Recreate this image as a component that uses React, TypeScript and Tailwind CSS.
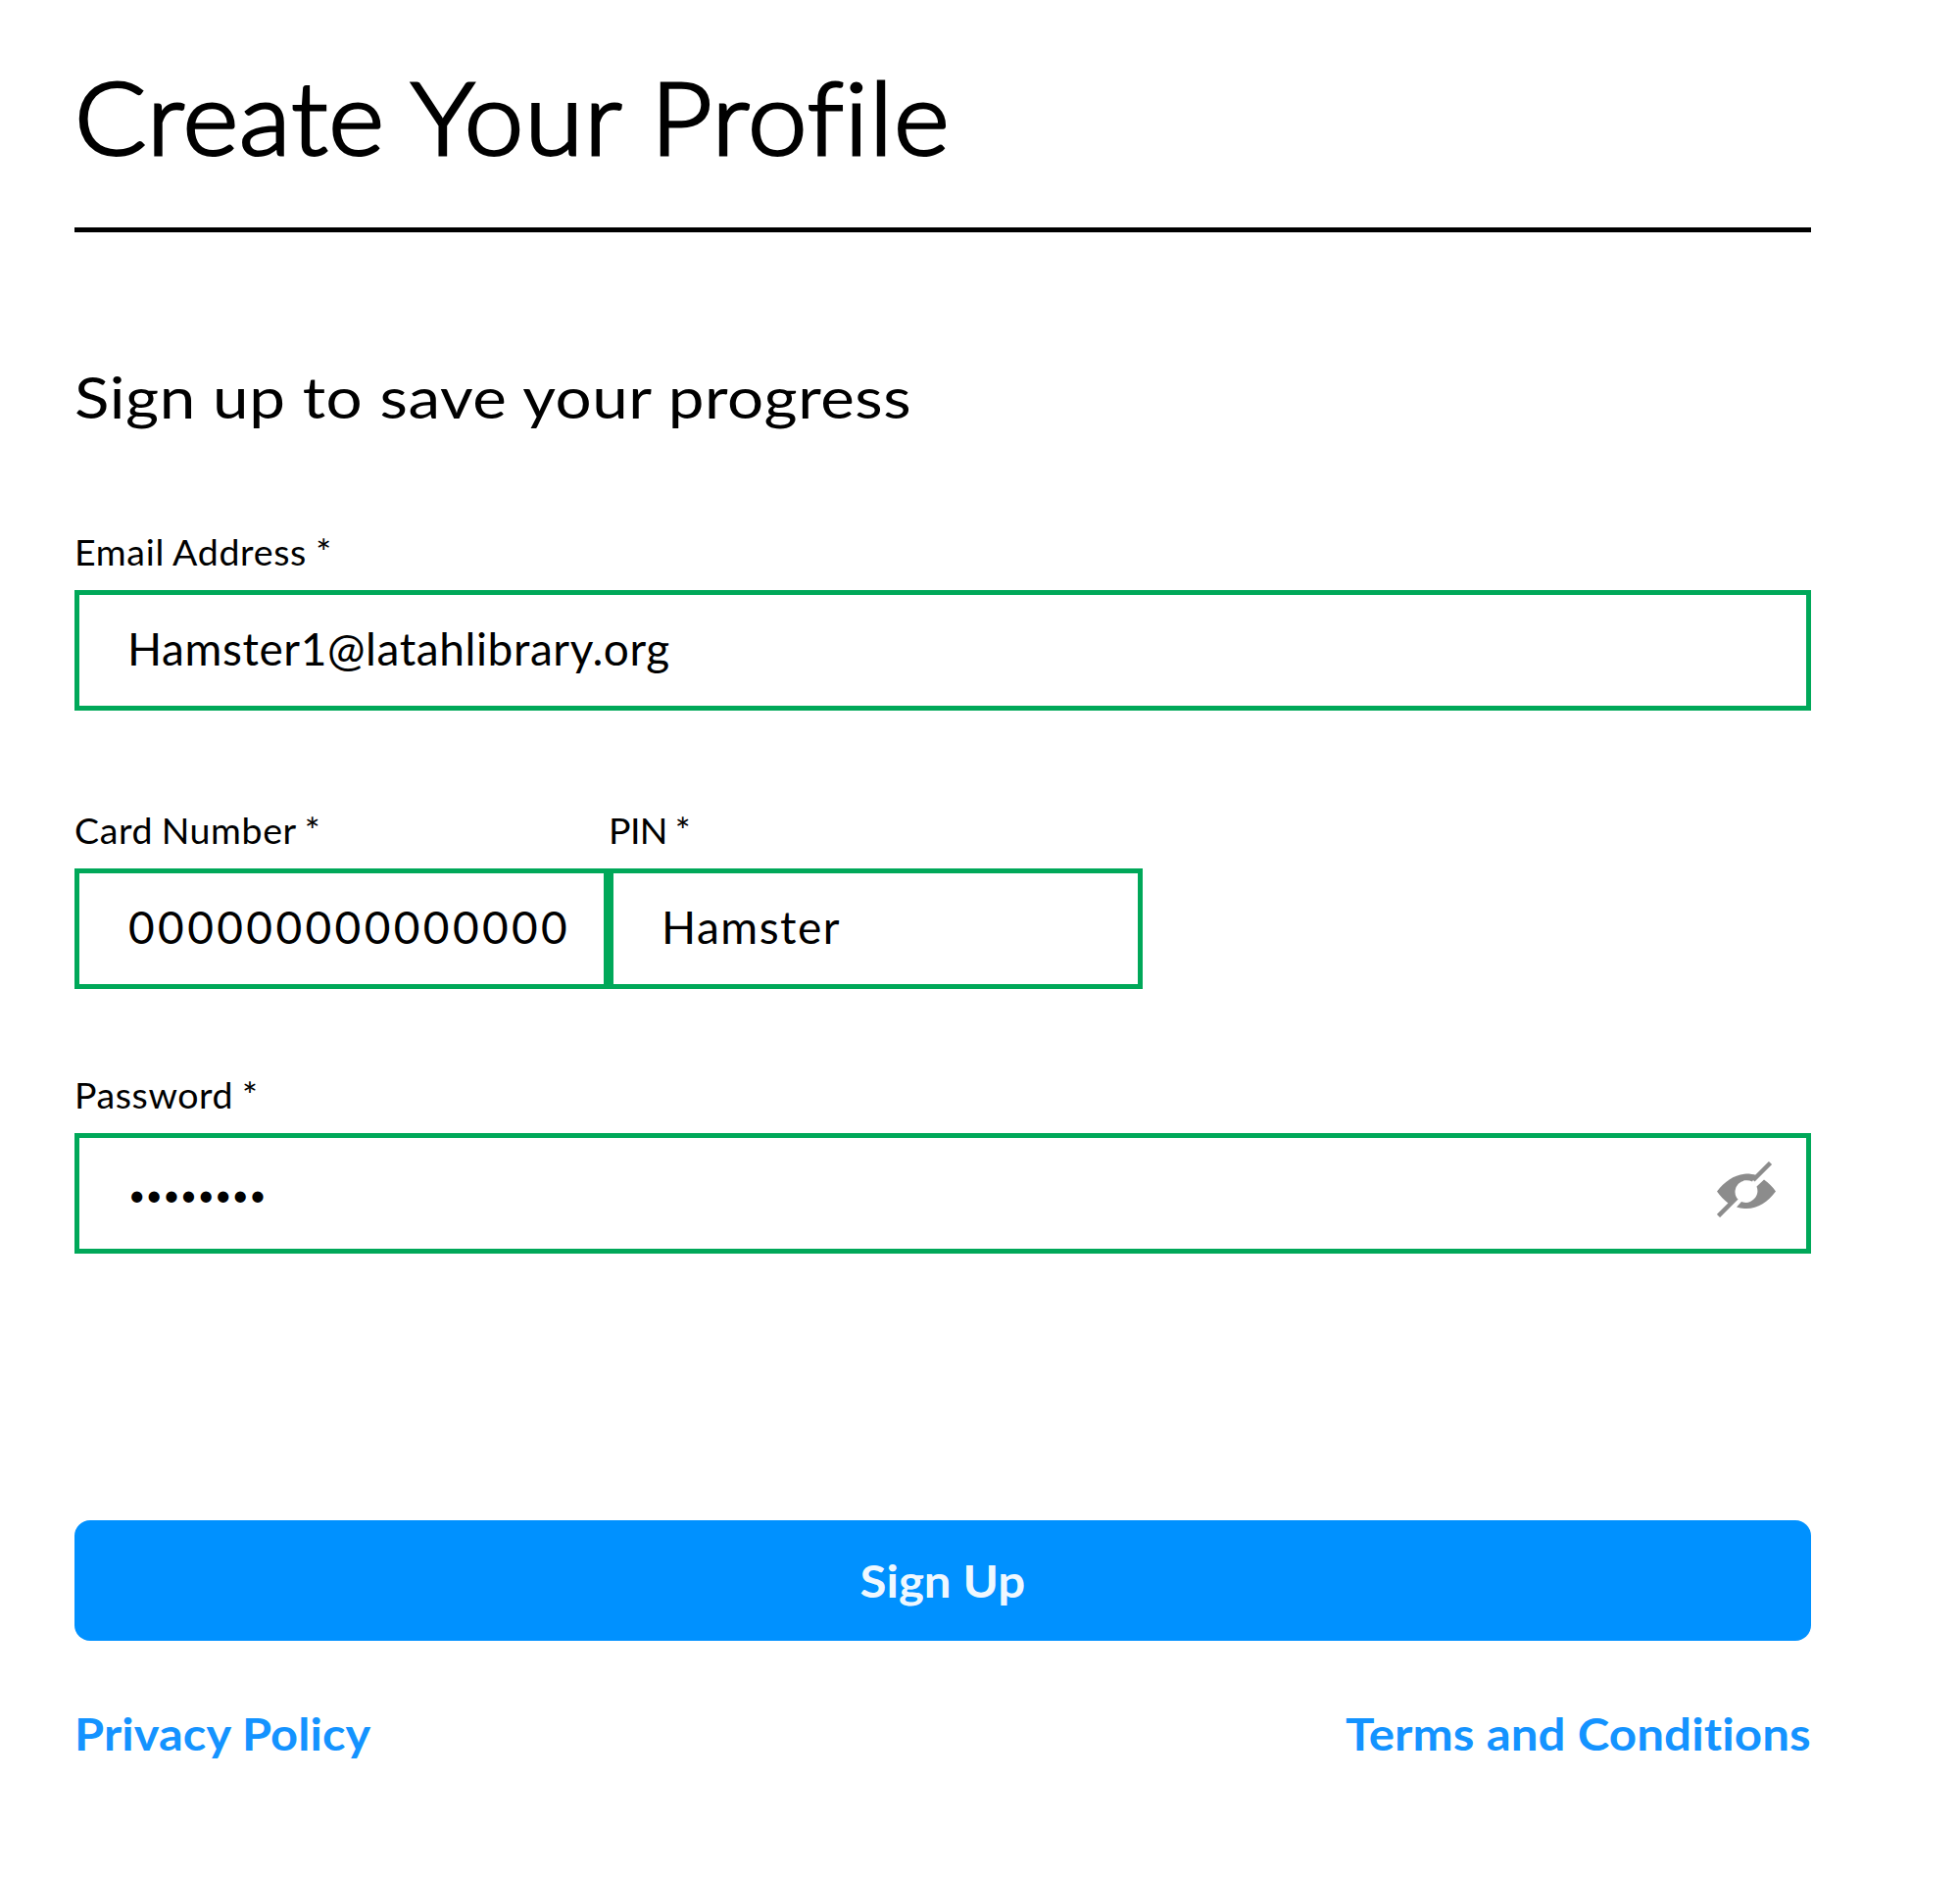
import { useState } from "react";

interface FieldProps {
  id: string;
  label: string;
  value: string;
  labelClass?: string;
  inputClass?: string;
  type?: string;
  onToggle?: () => void;
}

function EyeOffIcon() {
  return (
    <svg viewBox="0 0 60 57" className="h-[57px] w-[60px]" fill="none">
      <path
        d="M0 30.500C8 20 18 13 30 12.500C34 12.500 37 13 40 14L36 20.500A12 12 0 0 0 20 37L12 43C7 39 3 35 0 30.500Z"
        fill="#8c8c8c"
      />
      <path
        d="M48 18.500C53 22 57 26 60 30.500C52 41 42 48 30 48C26.500 48 23 47.500 20 46.500L25 41A12 12 0 0 0 40.500 25.500Z"
        fill="#8c8c8c"
      />
      <path d="M1.500 55.500L20 37M37 19L54.500 1.500" stroke="#8c8c8c" strokeWidth="4.500" />
    </svg>
  );
}

function Field({
  id,
  label,
  value,
  labelClass = "tracking-[0.6px] [word-spacing:-1.5px]",
  inputClass = "",
  type = "text",
  onToggle,
}: FieldProps) {
  return (
    <div className="flex flex-1 flex-col gap-[17px]">
      <label htmlFor={id} className={`text-[37.5px] leading-[44px] ${labelClass}`}>
        {label}
      </label>
      <div className="flex h-[123px] items-center border-5 border-[#00a859] bg-white pr-[31px] pl-[49px]">
        <input
          id={id}
          type={type}
          defaultValue={value}
          className={`h-full w-full min-w-0 flex-1 outline-none ${inputClass}`}
        />
        {onToggle && (
          <button type="button" aria-label="Toggle password" onClick={onToggle} className="mb-[9px]">
            <EyeOffIcon />
          </button>
        )}
      </div>
    </div>
  );
}

export default function App() {
  const [visible, setVisible] = useState(false);

  return (
    <main className="min-h-[1916px] bg-white pt-[58px] pl-[76px] font-['Lato',sans-serif] text-black">
      <form className="flex w-[1772px] flex-col" onSubmit={(e) => e.preventDefault()}>
        <h1 className="border-b-5 border-black pb-[54px] text-[103px] leading-[120px] font-light">
          <span className="inline-block origin-left scale-x-[1.055] tracking-[1px] [-webkit-text-stroke:3px_black]">
            Create Your Profile
          </span>
        </h1>

        <h2 className="mt-[133px] origin-left scale-x-[1.11] text-[59px] leading-[70px] tracking-[0.5px]">
          Sign up to save your progress
        </h2>

        <div className="mt-[101px] flex">
          <Field
            id="email"
            label="Email Address *"
            value="Hamster1@latahlibrary.org"
            labelClass="tracking-[0.7px] [word-spacing:-1px]"
            inputClass="pb-[5px] text-[46px] tracking-[0.6px]"
          />
        </div>

        <div className="mt-[100px] flex w-[1090px]">
          <Field
            id="card"
            label="Card Number *"
            value="000000000000000"
            inputClass="pb-[5px] pl-px text-[46px] tracking-[3.4px]"
          />
          <Field
            id="pin"
            label="PIN *"
            value="Hamster"
            labelClass="tracking-[-0.6px] [word-spacing:-1px]"
            inputClass="pb-[5px] text-[46px] tracking-[1.5px]"
          />
        </div>

        <div className="mt-[86px] flex">
          <Field
            id="password"
            label="Password *"
            value="hamster1"
            type={visible ? "text" : "password"}
            inputClass={visible ? "pb-[5px] text-[46px]" : "pt-px pl-px text-[30px] tracking-[0.2px]"}
            onToggle={() => setVisible(!visible)}
          />
        </div>

        <button
          type="submit"
          className="mt-[272px] h-[123px] rounded-2xl bg-[#0091ff] text-[46px] font-bold text-white/95"
        >
          <span className="inline-block scale-x-[1.07]">Sign Up</span>
        </button>

        <div className="mt-[67px] flex justify-between text-[46px] leading-[56px] font-bold tracking-[0.1px] text-[#1493ff]">
          <a href="#privacy" className="origin-left scale-x-[1.06]">
            Privacy Policy
          </a>
          <a href="#terms" className="origin-right scale-x-[1.07]">
            Terms and Conditions
          </a>
        </div>
      </form>
    </main>
  );
}
